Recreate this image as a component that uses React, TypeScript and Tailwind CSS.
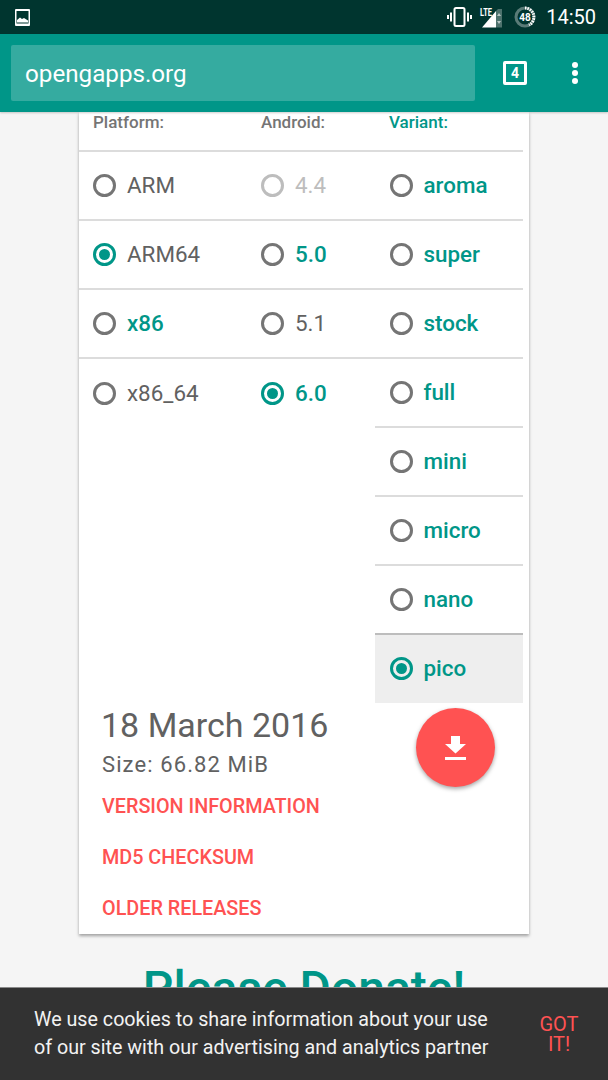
import React from 'react'

type Opt = { label: string; active?: boolean; checked?: boolean; disabled?: boolean }

const platforms: Opt[] = [
  { label: 'ARM' },
  { label: 'ARM64', checked: true },
  { label: 'x86', active: true },
  { label: 'x86_64' },
]

const androids: Opt[] = [
  { label: '4.4', disabled: true },
  { label: '5.0', active: true },
  { label: '5.1' },
  { label: '6.0', active: true, checked: true },
]

const variants: Opt[] = [
  { label: 'aroma', active: true },
  { label: 'super', active: true },
  { label: 'stock', active: true },
  { label: 'full', active: true },
  { label: 'mini', active: true },
  { label: 'micro', active: true },
  { label: 'nano', active: true },
  { label: 'pico', active: true, checked: true },
]

function Radio({ checked, disabled }: { checked?: boolean; disabled?: boolean }) {
  const ring = checked ? 'border-[#009688]' : disabled ? 'border-[#bdbdbd]' : 'border-[#757575]'
  return (
    <span className={`w-[23px] h-[23px] shrink-0 rounded-full border-[3px] flex items-center justify-center ${ring}`}>
      {checked && <span className="w-[11px] h-[11px] rounded-full bg-[#009688]" />}
    </span>
  )
}

function Option({ opt }: { opt: Opt }) {
  const text = opt.disabled
    ? 'text-[#bdbdbd]'
    : opt.active
      ? 'text-[#009688] font-medium'
      : 'text-[#616161]'
  return (
    <div className="flex items-center gap-[11px]">
      <Radio checked={opt.checked} disabled={opt.disabled} />
      <span className={`text-[22.4px] leading-none ${text}`}>{opt.label}</span>
    </div>
  )
}

function StatusBar() {
  return (
    <div className="h-[34px] shrink-0 bg-[#00352f] flex items-center text-white relative">
      <svg className="ml-[15px]" width="15" height="17" viewBox="0 0 15 17" fill="none">
        <rect x="0" y="0" width="15" height="17" rx="1" fill="#fff" />
        <rect x="1.5" y="2" width="12" height="12.5" fill="#00352f" />
        <path d="M2 13.5 L2 11 L5 8.5 L7 10 L9 9 L13 11.5 L13 13.5 Z" fill="#fff" />
      </svg>
      <div className="ml-auto flex items-center">
        <svg width="25" height="20" viewBox="0 0 25 20" fill="none" className="mr-[8px]">
          <rect x="7.5" y="1" width="10" height="18" rx="1.5" stroke="#fff" strokeWidth="2" />
          <path d="M4 5.5V14.5M21 5.5V14.5" stroke="#fff" strokeWidth="2" />
          <path d="M1 8V12M24 8V12" stroke="#fff" strokeWidth="2" />
        </svg>
        <svg width="22" height="21" viewBox="0 0 22 21" className="mr-[12px] overflow-visible">
          <path d="M16 4 L18 2 L22 2 L22 20.5 L16 20.5 Z" fill="#fff" opacity="0.3" />
          <path d="M2 20.5 L16 4 L16 20.5 Z" fill="#fff" />
          <path d="M19 6 L21 9 H17 Z M19 17 L17 14 H21 Z" fill="#fff" opacity="0.6" />
          <text x="0" y="8.5" fill="#fff" fontSize="11" fontWeight="700" fontFamily="Roboto, sans-serif" textLength="12" lengthAdjust="spacingAndGlyphs">LTE</text>
        </svg>
        <svg width="22" height="22" viewBox="0 0 22 22" className="mr-[10px]">
          <circle cx="11" cy="11" r="9" fill="none" stroke="#fff" strokeOpacity="0.35" strokeWidth="3" />
          <path d="M11 2 A9 9 0 0 1 15 19" fill="none" stroke="#fff" strokeWidth="3" strokeDasharray="1.5 1" />
          <text x="11" y="14.5" textAnchor="middle" fill="#fff" fontSize="10" fontWeight="700" fontFamily="Roboto, sans-serif">48</text>
        </svg>
        <span className="text-[20px] leading-none mr-[12px]">14:50</span>
      </div>
    </div>
  )
}

function Toolbar() {
  return (
    <div className="h-[78px] shrink-0 bg-[#009688] flex items-center pl-[11px] shadow-[0_1px_2px_rgba(0,0,0,0.2)] relative z-10">
      <div className="w-[464px] h-[56px] rounded-[2px] bg-[#35aba0] flex items-center pl-[14px] pt-[3px]">
        <span className="text-[24.2px] leading-none text-white">opengapps.org</span>
      </div>
      <div className="ml-[28px] w-[24px] h-[24px] border-[3px] border-white rounded-[2px] flex items-center justify-center">
        <span className="text-[14px] leading-none font-bold text-white">4</span>
      </div>
      <div className="ml-[45px] flex flex-col gap-[2px]">
        <span className="w-[6px] h-[6px] rounded-full bg-white" />
        <span className="w-[6px] h-[6px] rounded-full bg-white" />
        <span className="w-[6px] h-[6px] rounded-full bg-white" />
      </div>
    </div>
  )
}

export default function App() {
  return (
    <div className="relative h-[1080px] w-[608px] overflow-hidden bg-[#f5f5f5] flex flex-col font-['Roboto',sans-serif]">
      <StatusBar />
      <Toolbar />

      <div className="flex-1 overflow-hidden">
        {/* Card */}
        <div className="ml-[79px] w-[450px] bg-white flex shadow-[0_2px_3px_rgba(0,0,0,0.35)]">
          <div className="w-[296px] shrink-0 flex flex-col">
            <div className="flex h-[40px] border-b-2 border-[#dcdcdc]">
              <div className="w-[168px] pl-[14px] pt-px text-[17px] leading-[18px] font-medium text-[#757575]">Platform:</div>
              <div className="pl-[14px] pt-px text-[17px] leading-[18px] font-medium text-[#757575]">Android:</div>
            </div>
            {platforms.map((p, i) => (
              <div key={p.label} className={`flex items-center h-[69px] shrink-0 pb-px ${i < 3 ? 'border-b-2 border-[#dcdcdc]' : ''}`}>
                <div className="w-[168px] pl-[14px]">
                  <Option opt={p} />
                </div>
                <div className="pl-[14px]">
                  <Option opt={androids[i]} />
                </div>
              </div>
            ))}

            <div className="mt-[277px] pl-[23px] pb-[13px]">
              <div className="-ml-px text-[34px] leading-[40px] text-[#616161]">18 March 2016</div>
              <div className="mt-[7px] text-[22px] leading-[26px] tracking-[1.1px] text-[#616161]">Size: 66.82 MiB</div>
              <div className="mt-[17px] flex flex-col gap-[27px] text-[19.8px] leading-[24px] font-medium text-[#ff5252]">
                <span>VERSION INFORMATION</span>
                <span>MD5 CHECKSUM</span>
                <span>OLDER RELEASES</span>
              </div>
            </div>
          </div>

          <div className="flex-1 pr-[6px]">
            <div className="h-[40px] border-b-2 border-[#dcdcdc] pl-[14px] pt-px text-[17px] leading-[18px] font-medium text-[#009688]">Variant:</div>
            {variants.map((v, i) => (
              <div
                key={v.label}
                className={`flex items-center pl-[14.5px] pb-px ${
                  i < 6
                    ? 'h-[69px] border-b-2 border-[#dcdcdc]'
                    : i === 6
                      ? 'h-[69px] border-b-2 border-[#bdbdbd]'
                      : 'h-[68px] bg-[#eeeeee]'
                }`}
              >
                <Option opt={v} />
              </div>
            ))}
            <div className="mt-[5px] ml-[41px] w-[79px] h-[79px] rounded-full bg-[#ff5252] flex items-center justify-center shadow-[0_2px_4px_rgba(0,0,0,0.35)]">
              <svg width="21" height="24" viewBox="0 0 21 24" fill="#fff">
                <path d="M6 0H15V8H21L10.5 17.5L0 8H6Z" />
                <rect x="0" y="21" width="21" height="3" />
              </svg>
            </div>
          </div>
        </div>

        <div className="mt-[27px] text-center text-[48px] leading-[56px] font-medium text-[#009688]">Please Donate!</div>
      </div>

      {/* Cookie bar */}
      <div className="absolute left-0 right-0 bottom-0 h-[93px] bg-[#323232] border-t border-[#8a8a8a] flex items-center pl-[34px] pr-[29px]">
        <p className="w-[470px] text-[19.7px] leading-[28px] text-[#f2f2f2]">
          We use cookies to share information about your use of our site with our advertising and analytics partner
        </p>
        <span className="ml-auto w-[40px] text-center text-[20px] leading-[20px] text-[#ff5252]">GOT IT!</span>
      </div>
    </div>
  )
}
